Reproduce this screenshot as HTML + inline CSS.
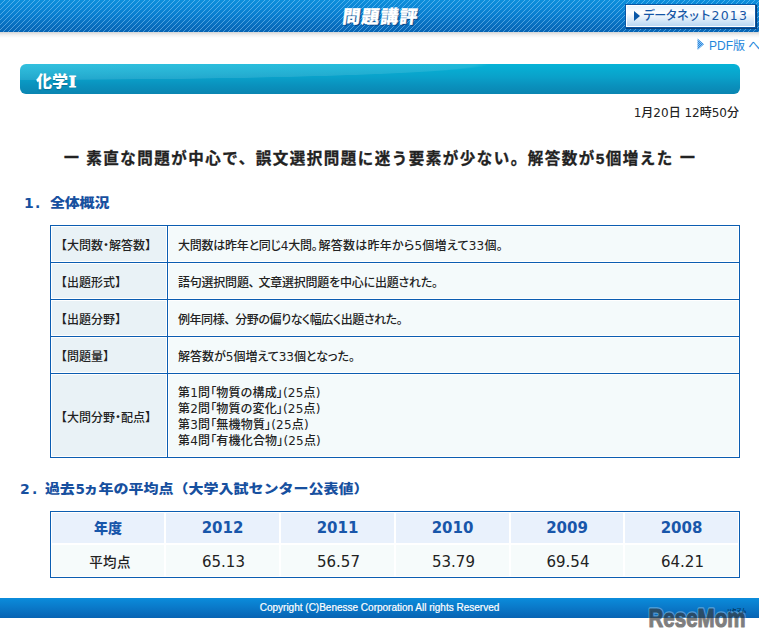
<!DOCTYPE html>
<html lang="ja">
<head>
<meta charset="utf-8">
<title>問題講評 化学I</title>
<style>
html,body{margin:0;padding:0;background:#fff;}
body{width:759px;height:641px;position:relative;overflow:hidden;font-family:"Liberation Sans","Noto Sans CJK JP",sans-serif;color:#222;}
.abs{position:absolute;white-space:nowrap;}
#hdr{left:0;top:0;width:759px;height:32px;background:linear-gradient(#0c8fdc,#0a7fd0 45%,#0764b4);}
#hshadow{left:0;top:32px;width:759px;height:6px;background:linear-gradient(#d4d4d4,#f2f2f2 50%,#fff);}
#title{left:340.5px;top:4px;-webkit-text-stroke:.25px #fff;font-size:18px;line-height:26px;font-weight:900;color:#fff;letter-spacing:1px;text-shadow:1px 1px 1px rgba(0,40,100,.7);transform:skewX(-7deg);transform-origin:0 100%;}
#btn{left:625px;top:4px;width:129px;height:22px;border:1px solid #0a56a4;box-shadow:1px 1px 0 #08407c;background:linear-gradient(#e4f0fc,#fff 35%,#d6e8f8 70%,#b4d4f2);}
#btn i{position:absolute;left:0;top:0;right:0;bottom:0;border:1px solid #fff;}
#btn b{position:absolute;left:8px;top:6px;width:0;height:0;border-left:6px solid #0a58a8;border-top:5px solid transparent;border-bottom:5px solid transparent;}
#btntxt{left:643px;top:7px;font-size:12px;line-height:18px;color:#1556a6;font-weight:500;letter-spacing:-.75px}
#btntxt span{font-family:"DejaVu Sans",sans-serif;font-size:12.5px;letter-spacing:1.2px;margin-left:1px;font-weight:400}
#pdf{left:709px;top:37px;font-size:12px;line-height:18px;color:#1f87dc;}
#bar{left:20px;top:64px;width:720px;height:30px;border-radius:6px;background:radial-gradient(ellipse 470px 16px at 0 0,rgba(255,255,255,.18),rgba(255,255,255,.10) 97%,rgba(255,255,255,0) 100%),linear-gradient(#06b3d7,#0aa0c9 45%,#0a92be 70%,#0a85b1);}
#bartxt{left:36px;top:70px;font-size:16px;line-height:22px;font-weight:900;color:#fff;text-shadow:0 1px 1px rgba(0,80,110,.5);}
#date{right:20px;top:104px;font-weight:500;font-family:"DejaVu Sans","Noto Sans CJK JP",sans-serif;font-size:12px;line-height:18px;color:#222;}
#lead{left:64px;top:147px;font-size:15.5px;line-height:24px;font-weight:700;letter-spacing:1.5px;color:#222;-webkit-text-stroke:.3px #222;}
#lead span{display:inline-block;transform:scale(1.25,1.3);}
.h3{font-size:15px;line-height:20px;font-weight:900;color:#17509f;letter-spacing:-.2px;}
.h3 span{position:absolute;top:0;letter-spacing:0;font-family:"DejaVu Sans",sans-serif;font-weight:700;font-size:14px}
.h3 i{font-style:normal;display:inline-block;transform:scaleY(.86);transform-origin:0 50%;}
.h3 em{font-style:normal;font-family:"DejaVu Sans",sans-serif;font-weight:700;font-size:13.5px;letter-spacing:0;display:inline-block;margin:0 -1.5px 0 1px}
#t1{left:50px;top:225px;width:690px;height:233px;background:#0b5db1;font-family:"DejaVu Sans","Noto Sans CJK JP",sans-serif;font-size:12px;line-height:16px;font-feature-settings:"palt";}
#t1 div{position:absolute;box-sizing:border-box;border:1px solid #fff;white-space:nowrap;}
#t1 .th{left:1px;width:116px;background:#e9f2f6;font-weight:500;color:#222;padding-left:3px;font-feature-settings:normal;}
#t1 .np{font-feature-settings:"palt";}
#t1 .p{margin-right:2px}
#t1 .td{left:118px;width:571px;background:#f4fafb;color:#222;padding-left:9px;font-weight:500;}
#t1 .r1{top:1px;height:36px;line-height:36px;padding-top:1px}
#t1 .r2{top:38px;height:36px;line-height:36px;padding-top:1px}
#t1 .r3{top:75px;height:36px;line-height:36px;padding-top:1px}
#t1 .r4{top:112px;height:36px;line-height:36px;padding-top:1px}
#t1 .r5{top:149px;height:83px;}
#t1 .th.r5{line-height:83px;padding-top:2px}
#t1 .td.r5{padding-top:10px;letter-spacing:.18px}
#t2{left:50px;top:511px;width:688px;height:65px;border:1px solid #0b5db1;background:#fff;}
#t2 div{position:absolute;text-align:center;}
#t2 .h{top:1px;height:30px;background:#e9f1fc;color:#1856aa;font-weight:700;font-family:"DejaVu Sans","Noto Sans CJK JP",sans-serif;font-size:15px;line-height:31px;}
#t2 .h.k{font-weight:900;font-size:14px;line-height:31px}
#t2 .d{top:33px;height:31px;background:#f6fbfb;color:#222;font-family:"DejaVu Sans","Noto Sans CJK JP",sans-serif;font-size:15px;line-height:35px;box-sizing:border-box;padding-left:2px}
#t2 .d.k{font-weight:500;font-size:13.5px;line-height:34px;padding-left:4px;letter-spacing:.4px}
#ftr{left:0;top:598px;width:759px;height:20px;background:linear-gradient(#0b8cdb,#0a78c8 50%,#0763b3);}
#copy{left:0;width:759px;top:598px;text-align:center;font-size:10px;line-height:19px;color:#fff;-webkit-text-stroke:.2px #fff;}
</style>
</head>
<body>
<div id="hdr" class="abs"><svg width="759" height="32" style="display:block"><defs><pattern id="st" width="5" height="5" patternUnits="userSpaceOnUse"><path d="M-1 6 L6 -1 M-1 1 L1 -1 M4 6 L6 4" stroke="#9bd8ff" stroke-opacity=".6" stroke-width=".8" fill="none"/></pattern></defs><rect width="759" height="32" fill="url(#st)"/></svg></div>
<div id="hshadow" class="abs"></div>
<div id="title" class="abs">問題講評</div>
<div id="btn" class="abs"><i></i><b></b></div>
<div id="btntxt" class="abs">データネット<span>2013</span></div>
<svg class="abs" style="left:697px;top:38px" width="8" height="13" viewBox="0 0 8 13"><defs><pattern id="dt" width="2" height="2" patternUnits="userSpaceOnUse"><rect width="2" height="2" fill="#8cc4f2"/><rect width="1" height="1" fill="#2a86de"/><rect x="1" y="1" width="1" height="1" fill="#2a86de"/></pattern></defs><path d="M0.5 0.5 L7 6.2 L0.5 12 Z" fill="url(#dt)"/></svg>
<div id="pdf" class="abs">PDF版 へ</div>
<div id="bar" class="abs"></div>
<div id="bartxt" class="abs">化学<span style="font-family:'Liberation Serif',serif;font-weight:700;font-size:18px;-webkit-text-stroke:.9px #fff;margin-left:1px;display:inline-block;transform:scaleY(.88);transform-origin:0 78%">I</span></div>
<div id="date" class="abs">1月20日 12時50分</div>
<div id="lead" class="abs"><span>－</span><b style="letter-spacing:1px"> </b>素直な問題が中心で、誤文選択問題に迷う要素が少ない。解答数が5個増えた <span>－</span></div>
<div class="abs h3" style="left:50px;top:193px"><span style="left:-26px">1</span><span style="left:-15px">.</span><i>全体概況</i></div>
<div id="t1" class="abs">
<div class="th r1">【大問数<span class="np">・</span>解答数】</div><div class="td r1"><span style="letter-spacing:-.25px">大問数は昨年と同じ4大問<span class="p" style="margin-right:1px">。</span></span><span style="letter-spacing:.25px">解答数は昨年から5個増えて33個。</span></div>
<div class="th r2">【出題形式】</div><div class="td r2" style="letter-spacing:-.22px">語句選択問題<span class="p" style="margin-right:4px">、</span>文章選択問題を中心に出題された。</div>
<div class="th r3">【出題分野】</div><div class="td r3" style="letter-spacing:-.44px">例年同様<span class="p" style="margin-right:5.5px">、</span>分野の偏りなく幅広く出題された。</div>
<div class="th r4">【問題量】</div><div class="td r4">解答数が5個増えて33個となった。</div>
<div class="th r5">【大問分野<span class="np">・</span>配点】</div><div class="td r5">第1問「物質の構成」(25点)<br>第2問「物質の変化」(25点)<br>第3問「無機物質」(25点)<br>第4問「有機化合物」(25点)</div>
</div>
<div class="abs h3" style="left:45px;top:479px"><span style="left:-25px">2</span><span style="left:-13px">.</span><i>過去</i><em>5</em><i style="letter-spacing:0">ヵ年の平均点（大学入試センター公表値）</i></div>
<div id="t2" class="abs">
<div class="h k" style="left:1px;width:112px">年度</div><div class="h" style="left:115px;width:113px">2012</div><div class="h" style="left:230px;width:113px">2011</div><div class="h" style="left:345px;width:113px">2010</div><div class="h" style="left:460px;width:112px">2009</div><div class="h" style="left:574px;width:113px">2008</div>
<div class="d k" style="left:1px;width:112px">平均点</div><div class="d" style="left:115px;width:113px">65.13</div><div class="d" style="left:230px;width:113px">56.57</div><div class="d" style="left:345px;width:113px">53.79</div><div class="d" style="left:460px;width:112px">69.54</div><div class="d" style="left:574px;width:113px">64.21</div>
</div>
<div id="ftr" class="abs"></div>
<div id="copy" class="abs">Copyright (C)Benesse Corporation All rights Reserved</div>
<svg class="abs" style="left:640px;top:600px" width="119" height="36" viewBox="0 0 119 36">
<text x="8.5" y="27" font-family="Liberation Sans, sans-serif" font-weight="bold" font-size="26" textLength="97" lengthAdjust="spacingAndGlyphs" fill="none" stroke="#fff" stroke-width="3.5" stroke-linejoin="round" opacity=".3">ReseMom</text>
<text x="8.5" y="27" font-family="Liberation Sans, sans-serif" font-weight="bold" font-size="26" textLength="97" lengthAdjust="spacingAndGlyphs" fill="#000" stroke="#000" stroke-width="1.2" stroke-linejoin="round" opacity=".5">ReseMom</text>
<text x="87" y="11.5" font-family="Liberation Sans, Noto Sans CJK JP, sans-serif" font-weight="bold" font-size="4.8" fill="#000" opacity=".55">リセマム</text>
</svg>
</body>
</html>
